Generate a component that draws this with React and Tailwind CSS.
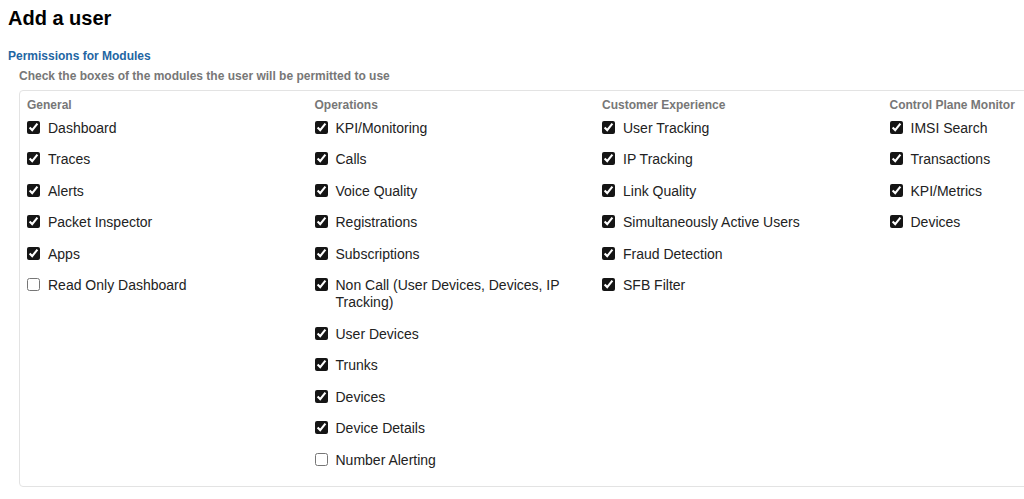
const columns = [
  {
    title: 'General',
    items: [
      ['Dashboard', true],
      ['Traces', true],
      ['Alerts', true],
      ['Packet Inspector', true],
      ['Apps', true],
      ['Read Only Dashboard', false],
    ],
  },
  {
    title: 'Operations',
    items: [
      ['KPI/Monitoring', true],
      ['Calls', true],
      ['Voice Quality', true],
      ['Registrations', true],
      ['Subscriptions', true],
      ['Non Call (User Devices, Devices, IP Tracking)', true],
      ['User Devices', true],
      ['Trunks', true],
      ['Devices', true],
      ['Device Details', true],
      ['Number Alerting', false],
    ],
  },
  {
    title: 'Customer Experience',
    items: [
      ['User Tracking', true],
      ['IP Tracking', true],
      ['Link Quality', true],
      ['Simultaneously Active Users', true],
      ['Fraud Detection', true],
      ['SFB Filter', true],
    ],
  },
  {
    title: 'Control Plane Monitor',
    items: [
      ['IMSI Search', true],
      ['Transactions', true],
      ['KPI/Metrics', true],
      ['Devices', true],
    ],
  },
];

function Column({ title, items }) {
  return (
    <div className="w-[287.5px] pr-5">
      <div className="text-[12px] leading-[14px] font-bold text-[#777]">{title}</div>
      <div className="mt-[8.2px] flex flex-col gap-[14.5px]">
        {items.map(([label, checked], i) => (
          <label key={i} className="flex items-start gap-2 text-[14px] leading-[17px] text-[#222]">
            <input
              type="checkbox"
              defaultChecked={checked}
              className="m-0 mt-[1px] w-[13px] h-[13px] shrink-0 accent-[#151515]"
            />
            <span>{label}</span>
          </label>
        ))}
      </div>
    </div>
  );
}

export default function App() {
  return (
    <div className="w-full overflow-x-hidden bg-white font-['Liberation_Sans',Arial,sans-serif]">
      <div className="pl-2 pt-[6px] w-[1200px]">
        <h1 className="text-[20px] leading-[24px] font-bold text-black">Add a user</h1>
        <div className="mt-[18.5px] text-[12px] leading-[14px] font-bold text-[#1f66a3]">
          Permissions for Modules
        </div>
        <div className="mt-[6.5px] ml-[11px] text-[12px] leading-[14px] font-bold text-[#777]">
          Check the boxes of the modules the user will be permitted to use
        </div>
        <div className="mt-[7px] ml-[11px] w-[1170px] rounded border border-[#e3e3e3] pl-[7px] pt-[6.5px] pb-[17.5px] flex">
          {columns.map((c) => (
            <Column key={c.title} {...c} />
          ))}
        </div>
      </div>
    </div>
  );
}
